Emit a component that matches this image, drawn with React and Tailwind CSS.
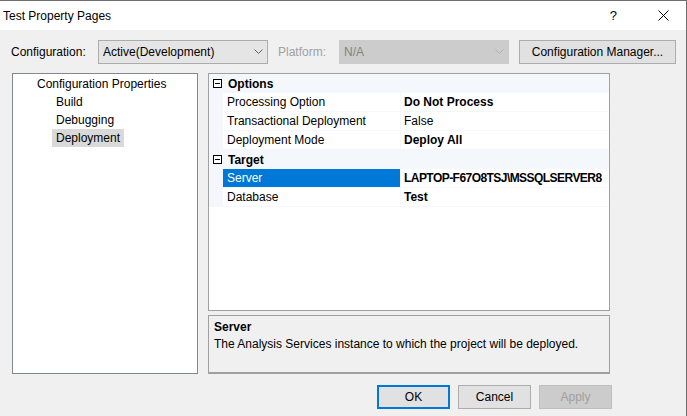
import React from 'react';

const font = { fontFamily: '"Liberation Sans", Arial, sans-serif' };

function Chevron({ color = '#606060' }) {
  return (
    <svg width="9" height="6" viewBox="0 0 9 6" className="shrink-0">
      <polyline points="0.5,0.5 4.5,4.5 8.5,0.5" fill="none" stroke={color} strokeWidth="1" />
    </svg>
  );
}

function MinusBox() {
  return (
    <svg width="9" height="9" viewBox="0 0 9 9" className="shrink-0">
      <rect x="0.5" y="0.5" width="8" height="8" fill="#fff" stroke="#000" strokeWidth="1" />
      <line x1="2" y1="4.5" x2="7" y2="4.5" stroke="#000" strokeWidth="1" />
    </svg>
  );
}

function Category({ label }) {
  return (
    <div className="flex h-[19px] items-center bg-[#f4f7fc]">
      <div className="flex w-[15px] justify-center pl-[1px]">
        <MinusBox />
      </div>
      <span className="pl-[4px] font-bold">{label}</span>
    </div>
  );
}

function Row({ name, value, bold, selected, tight }) {
  return (
    <div className="flex h-[19px]">
      <div className="w-[14px] shrink-0 bg-[#f4f7fc]" />
      <div
        className={
          'flex w-[177px] shrink-0 items-center border-b border-[#f4f7fc] pl-[4px] ' +
          (selected ? 'bg-[#0078d7] text-white' : '')
        }
      >
        {name}
      </div>
      <div className="w-[1px] shrink-0 bg-[#f4f7fc]" />
      <div
        className={
          'flex flex-1 items-center overflow-hidden border-b border-[#f4f7fc] pl-[3px] ' +
          (bold ? 'font-bold ' : '') +
          (tight ? 'tracking-[-0.55px]' : '')
        }
      >
        {value}
      </div>
    </div>
  );
}

export default function App() {
  return (
    <div
      className="relative h-[416px] w-[687px] overflow-hidden whitespace-nowrap border-r border-t border-[#6e6e6e] bg-[#f0f0f0] text-[12px] text-black"
      style={font}
    >
      {/* title bar */}
      <div className="flex h-[29px] items-center bg-white pl-[3px]">
        <span className="flex-1">Test Property Pages</span>
        <span className="mr-[41px] text-[13px]">?</span>
        <svg width="11" height="11" viewBox="0 0 11 11" className="mr-[17px]">
          <path d="M0.5 0.5 L10.5 10.5 M10.5 0.5 L0.5 10.5" stroke="#000" strokeWidth="1" />
        </svg>
      </div>

      {/* configuration row */}
      <div className="mt-[10px] flex h-[24px] items-center pl-[11px]">
        <span className="w-[87px]">Configuration:</span>
        <div className="flex h-[24px] w-[170px] items-center border border-[#acacac] bg-[#e5e5e5] pl-[4px] pr-[4px]">
          <span className="flex-1">Active(Development)</span>
          <Chevron />
        </div>
        <span className="ml-[10px] w-[61px] text-[#a0a0a0]">Platform:</span>
        <div className="flex h-[24px] w-[170px] items-center border border-[#cccccc] bg-[#cccccc] pl-[4px] pr-[4px] text-[#838383]">
          <span className="flex-1">N/A</span>
          <Chevron color="#b0b0b0" />
        </div>
        <button className="ml-[10px] flex h-[24px] w-[157px] items-center justify-center border border-[#adadad] bg-[#e1e1e1]">
          Configuration Manager...
        </button>
      </div>

      {/* panels */}
      <div className="mt-[9px] flex h-[301px] pl-[12px]">
        <div className="w-[186px] border border-[#828790] bg-white pt-[1px]">
          <div className="flex h-[18px] items-center pl-[24px]">Configuration Properties</div>
          <div className="flex h-[18px] items-center pl-[43px]">Build</div>
          <div className="flex h-[18px] items-center pl-[43px]">Debugging</div>
          <div className="flex h-[18px] items-center pl-[39px]">
            <span className="flex h-[18px] items-center bg-[#d9d9d9] px-[4px]">Deployment</span>
          </div>
        </div>

        <div className="ml-[10px] flex w-[402px] flex-col">
          <div className="h-[238px] border border-[#a0a0a0] bg-white">
            <Category label="Options" />
            <Row name="Processing Option" value="Do Not Process" bold />
            <Row name="Transactional Deployment" value="False" />
            <Row name="Deployment Mode" value="Deploy All" bold />
            <Category label="Target" />
            <Row name="Server" value="LAPTOP-F67O8TSJ\MSSQLSERVER8" bold selected tight />
            <Row name="Database" value="Test" bold />
          </div>
          <div className="mt-[4px] flex-1 border border-b-2 border-[#a0a0a0] bg-[#f0f0f0] px-[5px] pt-[3px]">
            <div className="font-bold leading-[17px]">Server</div>
            <div className="leading-[17px]">The Analysis Services instance to which the project will be deployed.</div>
          </div>
        </div>
      </div>

      {/* buttons */}
      <div className="mt-[11px] flex gap-[8px] pl-[377px]">
        <button className="flex h-[24px] w-[73px] items-center justify-center border-2 border-[#0078d7] bg-[#e1e1e1]">OK</button>
        <button className="flex h-[24px] w-[73px] items-center justify-center border border-[#adadad] bg-[#e1e1e1]">Cancel</button>
        <button className="flex h-[24px] w-[73px] items-center justify-center border border-[#bfbfbf] bg-[#cccccc] text-[#a0a0a0]">Apply</button>
      </div>
    </div>
  );
}
